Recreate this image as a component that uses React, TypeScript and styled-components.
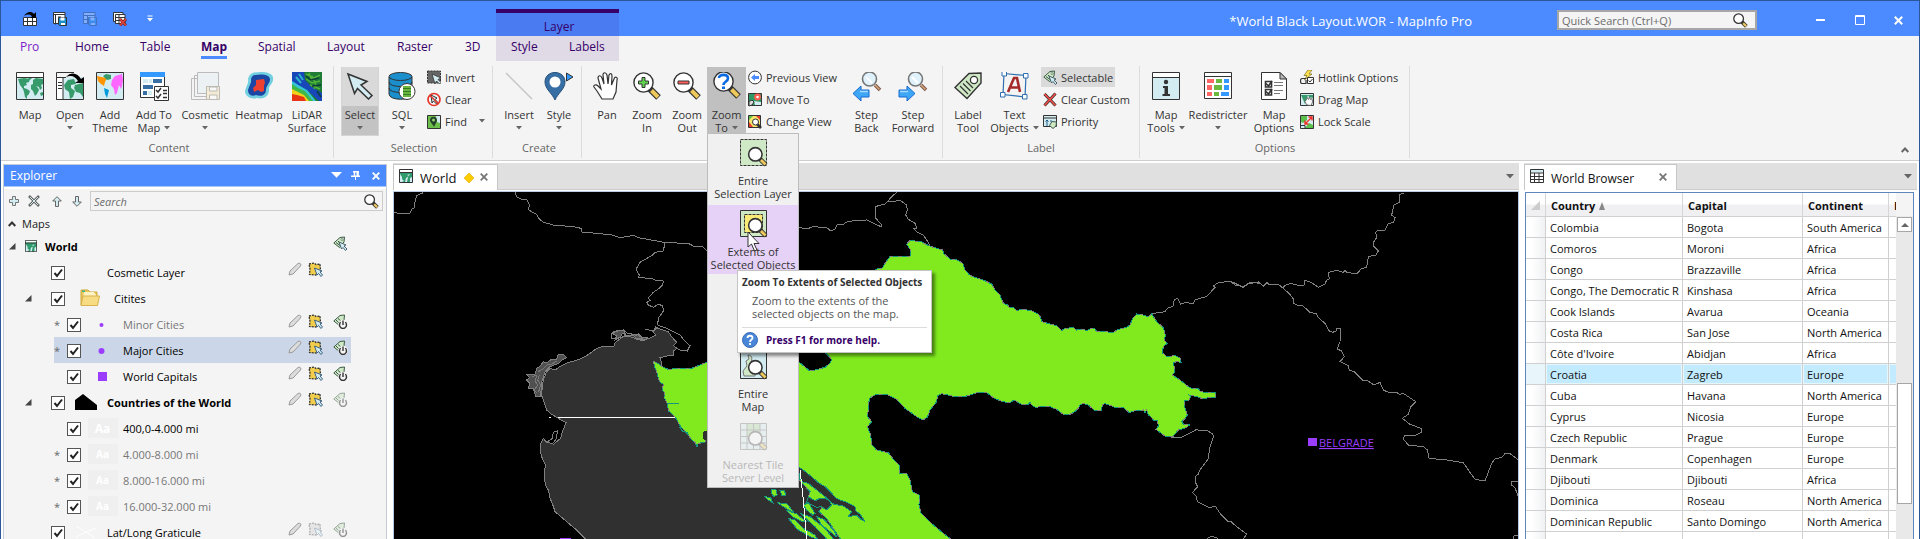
import React from "react";
import styled, { createGlobalStyle } from "styled-components";

const ink = "#333";
const green = "#379a6b";
const sky = "#d2ecf2";
const leaf = "#cfe8c5";

const Global = createGlobalStyle`
  *, *::before, *::after { box-sizing: border-box; }
  body { margin: 0; background: #fff; }
  body, button, input, table {
    font-family: "Open Sans", "Noto Sans", "Liberation Sans", sans-serif;
    font-size: 11px;
    color: #1a1a1a;
  }
  button { margin: 0; padding: 0; border: 0; background: none; cursor: default; }
  svg { display: block; flex: none; }
`;

/* ---------- frame ---------- */

const Frame = styled.div`
  display: flex;
  flex-direction: column;
  height: 100vh;
  min-width: 0;
  overflow: hidden;
  border: 1px solid #2b579a;
  border-bottom: 0;
  background: #fff;
`;

const TitleBar = styled.header`
  display: flex;
  align-items: center;
  flex: none;
  height: 35px;
  padding-right: 1px;
  background: #4c8bff;
`;

const QuickAccess = styled.div`
  display: flex;
  align-items: center;
  padding-left: 14px;
`;

const QuickButton = styled.button<{ $faded?: boolean }>`
  display: grid;
  place-items: center;
  width: 30px;
  height: 24px;
  opacity: ${(p) => (p.$faded ? 0.3 : 1)};
`;

const WindowTitle = styled.h1`
  margin: 4px 85px 0 auto;
  font-size: 13px;
  line-height: 20px;
  font-weight: 400;
  color: #fff;
  white-space: nowrap;
`;

const QuickSearch = styled.label`
  display: flex;
  align-items: center;
  width: 200px;
  height: 20px;
  margin: 3px 44px 0 0;
  padding-right: 7px;
  border: 2px solid #a6a6a6;
  background: #f4f4f4;
`;

const PlainInput = styled.input<{ $italic?: boolean }>`
  flex: 1;
  min-width: 0;
  padding: 0 3px;
  border: 0;
  outline: 0;
  background: transparent;
  font-style: ${(p) => (p.$italic ? "italic" : "normal")};
  &::placeholder { color: #6d6d6d; opacity: 1; }
`;

const WindowButton = styled.button`
  display: grid;
  place-items: center;
  width: 39px;
  height: 35px;
  padding-top: 3px;
`;

/* ---------- ribbon ---------- */

const TabBar = styled.nav`
  display: flex;
  align-items: flex-end;
  flex: none;
  height: 25px;
  padding-left: 19px;
  background: #f4f4f4;
`;

const Tab = styled.button<{ $w: number; $active?: boolean; $accent?: boolean }>`
  width: ${(p) => p.$w}px;
  height: 25px;
  text-align: left;
  font-size: 12px;
  line-height: 16px;
  font-weight: ${(p) => (p.$active ? 700 : 400)};
  color: ${(p) => (p.$accent ? "#7a22c9" : "#360068")};
  span {
    display: inline-block;
    height: 20px;
    border-bottom: 3px solid ${(p) => (p.$active ? "#4c8bff" : "transparent")};
  }
`;

const ContextGroup = styled.div`
  position: relative;
  width: 123px;
  height: 52px;
  border-top: 4px solid #360068;
  background: rgba(66, 0, 120, 0.11);
`;

const ContextTitle = styled.div`
  height: 23px;
  padding-left: 3px;
  line-height: 27px;
  text-align: center;
  font-size: 12px;
  color: #360068;
`;

const ContextTabs = styled.div`
  display: flex;
  padding-left: 15px;
`;

const Ribbon = styled.section`
  display: flex;
  flex: none;
  height: 100px;
  padding-top: 5px;
  border-bottom: 1px solid #cfcfcf;
  background: #f4f4f4;
`;

const Group = styled.section<{ $l: number; $r: number }>`
  display: flex;
  flex-direction: column;
  flex: none;
  height: 92px;
  padding: 1px ${(p) => p.$r}px 0 ${(p) => p.$l}px;
  border-right: 1px solid #dcdcdc;
`;

const GroupTools = styled.div`
  display: flex;
  height: 69px;
`;

const GroupName = styled.h2`
  margin: 0;
  font-size: 11px;
  line-height: 23px;
  font-weight: 400;
  text-align: center;
  color: #666;
`;

const BigButton = styled.button<{ $w: number; $state?: "split" | "open" }>`
  display: flex;
  flex-direction: column;
  align-items: center;
  width: ${(p) => p.$w}px;
  height: 69px;
  padding-top: 5px;
  line-height: 13px;
  color: ${ink};
  white-space: nowrap;
  background: ${(p) =>
    p.$state === "open"
      ? "#c0c0c0"
      : p.$state === "split"
      ? "linear-gradient(#d9d9d9 39px, #c3c3c3 39px)"
      : "none"};
  border: ${(p) => (p.$state === "split" ? "1px solid #d4d4d4" : "0")};
  border-width: 0 1px 1px;
`;

const IconSlot = styled.span`
  display: block;
  height: 28px;
`;

const BigLabel = styled.span`
  display: block;
  margin-top: 8px;
  text-align: center;
`;

const LabelLine = styled.span`
  display: flex;
  align-items: center;
  justify-content: center;
  gap: 4px;
  height: 13px;
`;

const SmallColumn = styled.div<{ $w: number }>`
  display: flex;
  flex-direction: column;
  align-items: flex-start;
  gap: 2px;
  width: ${(p) => p.$w}px;
`;

const SmallButton = styled.button<{ $on?: boolean; $wide?: boolean }>`
  display: flex;
  align-items: center;
  gap: 4px;
  width: ${(p) => (p.$wide ? "100%" : "auto")};
  height: 20px;
  padding: 0 2px;
  color: ${ink};
  white-space: nowrap;
  background: ${(p) => (p.$on ? "#dadada" : "none")};
  > svg:last-child:not(:first-child) { margin-left: auto; }
`;

const RibbonToggle = styled.button`
  align-self: flex-end;
  margin: 0 10px 7px auto;
`;

const MenuAnchor = styled.div`
  position: relative;
`;

const ZoomMenu = styled.div`
  position: absolute;
  z-index: 5;
  top: 66px;
  left: 0;
  width: 92px;
  border: 1px solid #bdbdbd;
  background: #f0f0f0;
`;

const MenuItem = styled.button<{ $hot?: boolean; $off?: boolean }>`
  position: relative;
  display: flex;
  flex-direction: column;
  align-items: center;
  width: 100%;
  height: ${(p) => (p.$hot || p.$off ? 69 : 71)}px;
  margin-bottom: ${(p) => (p.$hot ? 2 : 0)}px;
  padding-top: 4px;
  line-height: 13px;
  color: ${ink};
  white-space: nowrap;
  background: ${(p) => (p.$hot ? "#e6d2f7" : "none")};
  svg, span { opacity: ${(p) => (p.$off ? 0.3 : 1)}; }
  span { margin-top: 7px; }
`;

const MenuGap = styled.div`
  height: 71px;
`;

const Pointer = styled.svg`
  position: absolute;
  top: 26px;
  left: 39px;
`;

const Tip = styled.div`
  position: absolute;
  z-index: 6;
  top: 136px;
  left: 29px;
  width: 195px;
  height: 83px;
  padding: 4px;
  border: 1px solid #c4c4c4;
  background: #fff;
  box-shadow: 3px 3px 3px rgba(0, 0, 0, 0.45);
  color: ${ink};
  white-space: nowrap;
`;

const TipTitle = styled.strong`
  display: block;
  font-size: 10px;
  line-height: 15px;
`;

const TipText = styled.p`
  margin: 4px 0 7px 10px;
  line-height: 13px;
  color: #555;
`;

const TipHelp = styled.div`
  display: flex;
  align-items: center;
  gap: 8px;
  padding-top: 4px;
  border-top: 1px solid #dcdcdc;
  font-size: 10px;
  font-weight: 700;
  color: #360068;
`;

/* ---------- docked panes ---------- */

const Workspace = styled.main`
  display: flex;
  flex: 1;
  min-height: 0;
  padding: 2px 2px 0;
  background: #fff;
`;

const Explorer = styled.aside`
  display: flex;
  flex-direction: column;
  flex: none;
  width: 384px;
  margin-top: 1px;
  border: 1px solid #c4cad6;
  border-bottom: 0;
  background: #f4f4f4;
`;

const PaneHead = styled.header`
  display: flex;
  align-items: center;
  flex: none;
  height: 22px;
  padding-left: 6px;
  border-bottom: 1px solid #a9c4f5;
  background: #4c8bff;
  color: #fff;
`;

const PaneTitle = styled.h2`
  margin: 0 auto 0 0;
  font-size: 12px;
  font-weight: 400;
`;

const PaneButton = styled.button`
  display: grid;
  place-items: center;
  width: 20px;
  height: 20px;
`;

const TreeTools = styled.div`
  display: flex;
  align-items: center;
  flex: none;
  padding: 2px 3px 3px 0;
  border-top: 2px solid #fff;
`;

const TreeTool = styled.button`
  display: grid;
  place-items: center;
  width: 20px;
  height: 20px;
`;

const ToolPair = styled.div`
  display: flex;
  margin-right: 3px;
`;

const TreeSearch = styled.label`
  display: flex;
  align-items: center;
  flex: 1;
  height: 20px;
  padding-right: 3px;
  border: 1px solid #ccc;
`;

const SectionRow = styled.button`
  display: flex;
  align-items: center;
  flex: none;
  gap: 6px;
  height: 19px;
  padding-left: 4px;
`;

const Tree = styled.ul`
  flex: 1;
  min-height: 0;
  margin: 0;
  padding: 0;
  overflow: hidden;
  list-style: none;
`;

const TreeRow = styled.li<{ $level: number; $picked?: boolean }>`
  display: flex;
  align-items: center;
  width: ${(p) => (p.$level === 2 ? 297 : 347)}px;
  height: 26px;
  margin-left: ${(p) => (p.$level === 2 ? 50 : 0)}px;
  background: ${(p) => (p.$picked ? "#cbd7e8" : "none")};
`;

const Twisty = styled.span<{ $w: number }>`
  display: flex;
  justify-content: flex-end;
  width: ${(p) => p.$w}px;
`;

const Star = styled.span`
  width: 13px;
  color: #666;
`;

const Check = styled.input`
  appearance: none;
  flex: none;
  width: 14px;
  height: 14px;
  margin: 2px 0 0;
  border: 1px solid #555;
  background: #fff
    url("data:image/svg+xml,%3Csvg xmlns='http://www.w3.org/2000/svg' viewBox='0 0 12 12'%3E%3Cpath d='M2.5 6 5 9 10 2.5' fill='none' stroke='%23222' stroke-width='2'/%3E%3C/svg%3E")
    center / 12px 12px no-repeat;
`;

const Glyph = styled.span<{ $w: number }>`
  display: grid;
  place-items: center;
  flex: none;
  width: ${(p) => p.$w}px;
  height: 20px;
`;

const SampleText = styled.span<{ $big?: boolean }>`
  display: grid;
  place-items: center;
  width: 30px;
  height: 20px;
  margin-left: 1px;
  background: #efefef;
  color: #fff;
  font-size: ${(p) => (p.$big ? 12 : 10)}px;
  font-weight: 700;
`;

const TreeLabel = styled.label<{ $tone: "strong" | "normal" | "dim" }>`
  flex: 1;
  white-space: nowrap;
  color: ${(p) => (p.$tone === "dim" ? "#777" : "#000")};
  font-weight: ${(p) => (p.$tone === "strong" ? 700 : 400)};
`;

const RowActions = styled.span`
  display: grid;
  grid-template-columns: 20px 25px 18px;
  height: 20px;
`;

const Dock = styled.section<{ $w?: number }>`
  display: flex;
  flex-direction: column;
  flex: ${(p) => (p.$w ? `0 0 ${p.$w}px` : "1 1 0")};
  min-width: 0;
  margin-left: ${(p) => (p.$w ? 5 : 6)}px;
`;

const DockStrip = styled.div`
  display: flex;
  align-items: center;
  justify-content: space-between;
  flex: none;
  height: 27px;
  padding-right: 5px;
  border-bottom: 1px solid #ccc;
  background: #e0e0e0;
`;

const DockTab = styled.div<{ $w: number; $size: number }>`
  display: flex;
  align-items: center;
  width: ${(p) => p.$w}px;
  height: 26px;
  margin-top: 1px;
  padding: 2px 9px 0 5px;
  border: 1px solid #c6c6c6;
  border-bottom: 0;
  background: #fff;
  color: #111;
  font-size: ${(p) => p.$size}px;
  > svg:first-child { margin-right: 7px; margin-bottom: 5px; }
  > span { margin-right: auto; }
`;

const TabClose = styled.button`
  margin-left: 6px;
  margin-bottom: 3px;
`;

const MapPane = styled.div`
  flex: 1;
  min-height: 0;
  margin-top: 1px;
  border: 1px solid #b8cbe6;
  border-bottom: 0;
  background: #000;
  svg { width: 100%; height: 100%; }
`;

const BrowserPane = styled.div`
  display: flex;
  flex: 1;
  min-height: 0;
  margin: 2px 3px 0 1px;
  border: 1px solid #5f87bd;
  border-bottom: 0;
  overflow: hidden;
`;

const Sheet = styled.div`
  flex: 1;
  min-width: 0;
  overflow: hidden;
`;

const Grid = styled.table`
  width: 380px;
  table-layout: fixed;
  border-collapse: separate;
  border-spacing: 0;
  color: #111;
`;

const Head = styled.th`
  height: 24px;
  padding: 2px 4px 0 5px;
  border-right: 1px solid #d6d6d6;
  border-bottom: 1px solid #d0d0d0;
  background: linear-gradient(#fff 45%, #f0f0f2 55%);
  text-align: left;
  color: #111;
  overflow: hidden;
  white-space: nowrap;
  > span { display: flex; align-items: center; gap: 4px; }
`;

const Cell = styled.td<{ $on?: boolean; $head?: boolean }>`
  height: 21px;
  padding: 1px 0 0 4px;
  border-right: 1px solid #d0d0d0;
  border-bottom: 1px solid #d0d0d0;
  line-height: 16px;
  overflow: hidden;
  white-space: nowrap;
  background: ${(p) =>
    p.$on ? (p.$head ? "#e8f6fc" : "#c2ebff") : p.$head ? "linear-gradient(90deg, #fff 30%, #f0f1f3)" : "#fff"};
  box-shadow: ${(p) => (p.$on && !p.$head ? "inset 0 0 0 1px #e6f6fd" : "none")};
`;

const ScrollTrack = styled.div`
  display: flex;
  flex-direction: column;
  width: 17px;
  padding: 24px 1px 0;
  background: linear-gradient(#f4f4f4 23px, #e9e9e9 23px);
`;

const ScrollUp = styled.button`
  display: grid;
  place-items: center;
  height: 15px;
  border: 1px solid #a6a6a6;
  background: #fff;
`;

const ScrollThumb = styled.div`
  height: 121px;
  margin-top: 151px;
  border: 1px solid #a6a6a6;
  background: #fff;
`;

/* ---------- icons ---------- */

const Caret = ({ w = 6, fill = "#666" }: { w?: number; fill?: string }) => (
  <svg width={w} height={w / 2 + 1} viewBox="0 0 6 4" preserveAspectRatio="none">
    <path d="M0 0H6L3 3.6Z" fill={fill} />
  </svg>
);

const Continents = () => (
  <g fill={green}>
    <path d="M2 7 8 6 14 7 13 10 10 11 11 13 8 14 8 16 11 17 14 19 13 22 11 24 11 27 9 25 8 20 7 17 4 13 3 10Z" />
    <path d="M12 6H16L14 8ZM17 8 20 6 27 7 27 12 25 13 26 16 24 18 23 15 20 14 22 16 23 18 21 22 19 24 17 19 15 17 15 13 17 12ZM24 21 27 20V23L25 24Z" />
  </g>
);

const MapIcon = () => (
  <svg width="28" height="28" viewBox="0 0 28 28">
    <path d="M.5.5H27.5V27.5H.5Z" fill={sky} />
    <Continents />
    <path d="M.5.5H27.5V5H.5Z" fill="#fff" />
    <path d="M.5.5H27.5V27.5H.5ZM.5 5.5H27.5" fill="none" stroke={ink} />
  </svg>
);

const MiniMapIcon = ({ size }: { size: number }) => (
  <svg width={size} height={size} viewBox="0 0 14 14">
    <path d="M.5.5H13.5V13.5H.5Z" fill="#2f9a6b" stroke={ink} />
    <path d="M1 1H13V3H1Z" fill="#fff" />
    <path d="M0 3.5H14" stroke={ink} />
    <path d="M1 5 3 8 3 10 5 12 3 13H1ZM6 13 7 9 10 7 8 6 11 5 9 8 8 13ZM11 9 13 8V13H11Z" fill={sky} />
  </svg>
);

const OpenIcon = () => (
  <svg width="28" height="28" viewBox="0 0 28 28">
    <path d="M6 5H27V27H6Z" fill={sky} />
    <path d="M8 13 12 8 18 7 20 12 15 13 15 16 19 19 17 25 14 27 13 20 9 17ZM19 13 27 11V25L24 21 20 20 18 16Z" fill={green} />
    <path d="M27.5 10V27.5H.5V.5H18M.5 5.5H10" fill="none" stroke={ink} />
    <path d="M.5 5.5H7V27.5H.5Z" fill="#fff" stroke={ink} />
    <path d="M2 10.5H6M2 13.5H6M2 16.5H6" stroke={ink} />
    <path d="M10 5C15-1 22 1 25 7L28 5V11H19L22 9C19 4 15 3 10 5Z" fill="#000" />
  </svg>
);

const ThemeIcon = () => (
  <svg width="28" height="28" viewBox="0 0 28 28">
    <path d="M.5.5H27.5V27.5H.5Z" fill={sky} />
    <path d="M1 4 5 5 11 6 9 10 8 14 5 12 2 9Z" fill="#ff9500" />
    <path d="M7 4 10 2 15 3 15 7 11 8Z" fill={green} />
    <path d="M8 16 13 18 12 22 11 26 9 22Z" fill="#009adb" />
    <path d="M16 8 19 4 26 2 27 8 26 14 25 17 23 13 21 21 19 23 18 17 15 13Z" fill="#ff66ff" />
    <path d="M.5.5H27.5V27.5H.5Z" fill="none" stroke={ink} />
  </svg>
);

const AddToMapIcon = () => (
  <svg width="30" height="30" viewBox="0 0 30 30">
    <path d="M1.5.5H25.5V25.5H1.5Z" fill="#fff" stroke={ink} />
    <path d="M1 0H26V5H1Z" fill="#3399ff" />
    <path d="M4 7H9V11H4ZM10 7H13V11H10ZM9 19H13V23H9Z" fill={sky} />
    <path d="M14 7H23V11H14ZM4 13H14V17H4ZM4 19H8V23H4Z" fill="#376fa5" />
    <path d="M15.5 14.5H29.5V28.5H15.5Z" fill="#fff" stroke={ink} />
    <path d="M17 18 19 20 22 16M17 24 19 26 22 22M24 18.5H28M24 21.5H28M24 25.5H28" fill="none" stroke={ink} strokeWidth="1.5" />
  </svg>
);

const CosmeticIcon = () => (
  <svg width="30" height="28" viewBox="0 0 30 28" opacity=".45">
    <path d="M1.5 6.5H20V27.5H1.5ZM4.500 3.500H24V24.500H4.500Z" fill="#f4f4f4" stroke="#777" />
    <path d="M7.5.5H28.500V21.500H7.500Z" fill="#e3f1f4" stroke="#777" />
    <path d="M16.5 14.5H29.500V27.500H16.500Z" fill="#f3e2b0" stroke="#776" />
    <path d="M19.5 15H27V19H19.500ZM19.500 23H27V27.500H19.500Z" fill="#fff" stroke="#776" />
  </svg>
);

const HeatmapIcon = () => (
  <svg width="30" height="28" viewBox="0 0 30 28">
    <path d="M10 .5C17-.5 28-.5 29 5.500 30 12 24 13 25 18 25 25 19 27.500 13 26 7 28 1 24 1 19 2 14 5 11 4 7 5 3 7 1 10 .5Z" fill="#72cfe0" />
    <path d="M11 3C17 2 25 2 26 7 26 12 22 13 22 18 22 23 17 25 12 23 7 25 4 22 4 18 5 14 8 11 7 7 8 4 9 3 11 3Z" fill="#1b46a3" />
    <path d="M12 8 20 7 21 11 20 13 20 19 17 20 14 18 10 20 9 16 12 13Z" fill="#ef4130" />
  </svg>
);

const LidarIcon = () => (
  <svg width="30" height="30" viewBox="0 1 30 30">
    <path d="M0 0H30V30H0Z" fill="#1f7a35" />
    <path d="M12 0H0V12L8 15 16 20 27 30H30V22L20 16 13 9Z" fill="#1747b8" />
    <path d="M0 10 8 15 15 19 24 30H0Z" fill="#35c4d8" />
    <path d="M0 13 6 17 13 20 21 30H0Z" fill="#3fb848" />
    <path d="M0 18 6 21 12 24 17 30H0Z" fill="#f0d21c" />
    <path d="M0 23 5 24 12 26 14 30H0Z" fill="#e63414" />
    <path d="M7 3 11 9M4 6 9 12" stroke="#2bb5c9" strokeWidth="2" />
    <path d="M14 3 22 7 28 4M14 8 20 12 28 10M18 14 28 18M20 5 24 14 22 18M17 2 20 10" fill="none" stroke="#4fb63a" strokeWidth="1.5" />
    <path d="M14 5 19 9 27 7M20 15 29 14M25 20 29 26" fill="none" stroke="#0d3d3a" strokeWidth="1.5" />
  </svg>
);

const ArrowIcon = () => (
  <svg width="28" height="28" viewBox="0 0 28 28">
    <path d="M2 2 21 9.5 15 13 26 23.5 22.5 27 11.5 16.5 8.500 21.500Z" fill={sky} stroke={ink} strokeWidth="1.500" />
  </svg>
);

const SqlIcon = () => (
  <svg width="28" height="29" viewBox="0 0 28 29">
    <path d="M1 5V22C1 29 24 29 24 22V5" fill="#1a8fcc" stroke={ink} />
    <ellipse cx="12.5" cy="4.5" rx="11.5" ry="4" fill="#1a8fcc" stroke={ink} />
    <path d="M1 10C1 16 24 16 24 10M1 16C1 22 24 22 24 16" fill="none" stroke={ink} />
    <circle cx="19" cy="19.5" r="8" fill="#fff" stroke={ink} />
    <path d="M15 14H23V25H15Z" fill="#6cb33f" />
    <path d="M15 16.5H23M15 19.5H23M15 22.5H23" stroke="#2f7d22" />
  </svg>
);

const InsertIcon = () => (
  <svg width="28" height="28" viewBox="0 0 28 28">
    <path d="M1 1 27 27" stroke="#c4c4c4" strokeWidth="1.5" />
  </svg>
);

const StyleIcon = () => (
  <svg width="30" height="29" viewBox="0 0 30 29">
    <path d="M11 28C8 21 1 17 1 10 1 4 5.5.5 11 .5S21 4 21 10C21 17 14 21 11 28Z" fill="#376fa5" stroke="#27527c" />
    <circle cx="11" cy="10" r="5.5" fill="#fff" />
    <path d="M22.5 1 29 5 22.5 9Z" fill="#3399ff" stroke={ink} />
  </svg>
);

const HandIcon = () => (
  <svg width="28" height="28" viewBox="0 0 28 28">
    <path
      d="M9 27 4 19 1 15C0 13 3 12 5 14L8 17 5 6C5 3 8 3 9 6L11 12 10 3C10 0 13 0 14 3L15 12 16 3C17 1 19 1 19 4L18.5 13 21 7C22 4 25 5 24 8L23 20 20 27Z"
      fill="#fff"
      stroke={ink}
      strokeWidth="1.2"
    />
  </svg>
);

const Lens = ({ rim = 1.4 }: { rim?: number }) => (
  <>
    <path d="M17 17 25.5 25.5" stroke={ink} strokeWidth="6.5" />
    <path d="M18.5 18.5 25 25" stroke="#eec85b" strokeWidth="4" />
    <circle cx="10.5" cy="10.5" r="9.6" fill="#fff" stroke={ink} strokeWidth={rim} />
  </>
);

const ZoomInIcon = () => (
  <svg width="28" height="28" viewBox="0 0 28 28">
    <Lens />
    <path d="M9 5.5H12V9H15.5V12H12V15.5H9V12H5.5V9H9Z" fill="#5fd34d" stroke={ink} />
  </svg>
);

const ZoomOutIcon = () => (
  <svg width="28" height="28" viewBox="0 0 28 28">
    <Lens />
    <path d="M5 9H16V12H5Z" fill="#ff5f5f" stroke={ink} />
  </svg>
);

const ZoomToIcon = () => (
  <svg width="28" height="28" viewBox="0 1 28 28">
    <Lens />
    <path d="M6 7C6 3 15 2.5 15 7.5 15 10.5 10.5 10.5 10.5 14" fill="none" stroke="#0a6ae0" strokeWidth="2.6" />
    <path d="M9 15.5H12V18H9Z" fill="#0a6ae0" />
  </svg>
);

const StepIcon = ({ forward }: { forward?: boolean }) => (
  <svg width="30" height="31" viewBox="0 1 30 31">
    <path d="M23 14 28 19" stroke="#7a5548" strokeWidth="3.5" />
    <path d="M23 14 27.5 18.5" stroke="#d8a878" strokeWidth="1.5" />
    <circle cx="17.5" cy="8" r="7" fill="#dff1fa" stroke="#777" strokeWidth="1.6" />
    <path d="M14 6 20 12" stroke="#fff" strokeWidth="2" />
    <path
      d={forward ? "M1 19H9V15L17 22.5 9 30V26H1Z" : "M17 19H9V15L1 22.5 9 30V26H17Z"}
      fill="#3ea6f5"
      stroke="#1669d2"
    />
    <path d={forward ? "M2 20.5H10" : "M16 20.5H8"} stroke="#a8dcff" strokeWidth="1.5" />
  </svg>
);

const TagIcon = () => (
  <svg width="28" height="28" viewBox="0 0 28 28">
    <path d="M15 1.5 27 1 27 11 13 26.5 1 15.5Z" fill={leaf} stroke={ink} strokeWidth="1.4" />
    <circle cx="20" cy="8" r="3.6" fill="#fff" stroke={ink} strokeWidth="1.3" />
    <path d="M6 14 14 22M9 11.5 16.5 19M12 9 19 16" stroke={ink} strokeWidth="1.2" />
  </svg>
);

const TextObjectsIcon = () => (
  <svg width="30" height="30" viewBox="0 2 30 30">
    <path d="M4 3.5 26 5.5 25 27 3 24.5Z" fill="none" stroke="#2f6fb0" strokeWidth="1.2" />
    <g fill="#fff" stroke="#2f6fb0">
      <path d="M2 1.5H6.5V6H2ZM23.5 3.5H28V8H23.5ZM.5 22.5H5V27H.5ZM22.5 24.5H27V29H22.5Z" />
    </g>
    <path d="M8 22 14 8H17L20 22M11 17.5H18" fill="none" stroke="#a52a2a" strokeWidth="2.6" />
  </svg>
);

const MapToolsIcon = () => (
  <svg width="28" height="28" viewBox="0 0 28 28">
    <path d="M.5.5H27.5V27.5H.5Z" fill={sky} />
    <path d="M.5.5H27.5V5.5H.5Z" fill="#fff" />
    <path d="M.5.5H27.5V27.5H.5ZM.5 5.5H27.5" fill="none" stroke={ink} />
    <circle cx="14" cy="10" r="2.2" fill={ink} />
    <path d="M11 14H16V22H18V24H10.5V22H12.5V16H11Z" fill={ink} />
  </svg>
);

const RedistrictIcon = () => (
  <svg width="28" height="28" viewBox="0 1 28 28">
    <path d="M.5 1.5H27.5V27.5H.5ZM.5 5.5H27.5" fill="#fff" stroke={ink} />
    <path d="M3 8H10V12H3ZM3 14H8V19H3ZM3 21H8V25H3Z" fill="#ff6666" />
    <path d="M12 8H18V12H12ZM10 14H18V19H10ZM10 21H15V25H10Z" fill="#6cb93f" />
    <path d="M20 8H25V12H20ZM20 14H25V19H20ZM17 21H25V25H17Z" fill="#3399ff" />
  </svg>
);

const MapOptionsIcon = () => (
  <svg width="26" height="28" viewBox="0 0 26 28">
    <path d="M.5.5H19L25.5 7V27.5H.5Z" fill="#fff" stroke={ink} />
    <path d="M19 .5V7H25.5Z" fill="#bbb" stroke={ink} />
    <path d="M4.5 9.5H10.5V15H4.5ZM4.5 17.5H10.5V23H4.5Z" fill="none" stroke={ink} strokeWidth="1.6" />
    <path d="M5 11.5 7.5 14 11 9M5 19.5 7.5 22 11 17" fill="none" stroke={ink} strokeWidth="1.6" />
    <path d="M13 10.5H22M13 13.5H22M13 18.5H22M13 21.5H19" stroke="#777" />
  </svg>
);

const SmallSvg = ({ children }: { children: React.ReactNode }) => (
  <svg width="14" height="15" viewBox="0 0 14 15">{children}</svg>
);

const InvertIcon = () => (
  <SmallSvg>
    <path d="M.5 1H13.5V13H.5Z" fill="#666" stroke={ink} strokeDasharray="2 1" />
    <path d="M5 4 14 8 11 9.5 14 12.5 12.5 14 9.5 11 8 14Z" fill={sky} stroke={ink} strokeWidth=".8" />
  </SmallSvg>
);
const ClearIcon = () => (
  <SmallSvg>
    <path d="M4 3 10 6 8 7.5 11 10.5 9.5 12 6.5 9 5 11Z" fill={sky} stroke={ink} />
    <circle cx="7" cy="7.5" r="6" fill="none" stroke="#e5352b" strokeWidth="1.7" />
    <path d="M3 3.5 11 11.5" stroke="#e5352b" strokeWidth="1.5" />
  </SmallSvg>
);
const FindIcon = () => (
  <SmallSvg>
    <path d="M.5 1.5H13.5V14.5H.5Z" fill="#6cbf4b" stroke={ink} />
    <path d="M9 2H13V9L10 8Z" fill={sky} />
    <path d="M7 13C6 10 3 8.5 3 6 3 1.5 10 1.5 10 6 10 8.5 8 10 7 13Z" fill="#24402a" />
    <circle cx="6.5" cy="6" r="1.5" fill="#8fd36f" />
  </SmallSvg>
);
const PreviousIcon = () => (
  <SmallSvg>
    <circle cx="7" cy="7.5" r="6.4" fill="#fff" stroke={ink} />
    <path d="M3 7.5 7 4V6H11V9H7V11Z" fill="#4c8bff" />
  </SmallSvg>
);
const MoveToIcon = () => (
  <SmallSvg>
    <path d="M.5 1.5H13.5V13.5H.5Z" fill="#2f9a66" stroke={ink} />
    <path d="M6 9 13 10V13H7Z" fill={sky} />
    <circle cx="9.5" cy="5" r="3.4" fill="#ff5a4d" />
    <circle cx="9.5" cy="5" r="1.3" fill="#fff" />
    <path d="M1 14V9.5L4 8 6 10 4 13Z" fill="#ddd" stroke={ink} />
  </SmallSvg>
);
const ChangeViewIcon = () => (
  <SmallSvg>
    <path d="M.5 1.5H12.5V13.5H.5Z" fill="#f7e36a" stroke={ink} />
    <path d="M1 13V8L5 13ZM8 2H12V6Z" fill="#e83a2d" />
    <path d="M1 2H5L1 6Z" fill="#5bbf4b" />
    <path d="M9 10 13 14" stroke={ink} strokeWidth="2.6" />
    <circle cx="7.5" cy="8" r="3" fill="#fff" stroke={ink} />
  </SmallSvg>
);
const SmallTag = () => (
  <path d="M7 1.5 11.5 1 11 6 6.5 11.5 .8 7Z" fill={leaf} stroke="#3c5a46" />
);
const SelectableIcon = () => (
  <SmallSvg>
    <SmallTag />
    <path d="M3 6.5 7 9.5M5 5 8 8" stroke="#3c5a46" />
    <circle cx="9" cy="3.5" r="1" fill="#fff" stroke="#3c5a46" strokeWidth=".6" />
    <path d="M6 6 13 9 11 10 14 13 12.500 14.500 10 11.500 8.500 13Z" fill={sky} stroke="#3b5560" strokeWidth=".9" />
  </SmallSvg>
);
const ClearCustomIcon = () => (
  <SmallSvg>
    <path d="M1.5 2 12.5 13.5M12.5 1.5 1.5 13.5" stroke={ink} strokeWidth="3" />
    <path d="M1.5 2 12.5 13.5M12.5 1.5 1.5 13.5" stroke="#ee4b43" strokeWidth="1.8" />
  </SmallSvg>
);
const PriorityIcon = () => (
  <SmallSvg>
    <path d="M.5 1.5H13.5V12.5H.5ZM.5 4H13.5" fill={sky} stroke={ink} />
    <path d="M4 6V12M2.5 7.5 4 6 5.5 7.5M7 7H9" fill="none" stroke="#1d5a86" />
    <path d="M9 7.5 13.5 8 13 12 10 14.5 6.5 11.5Z" fill={leaf} stroke="#3c5a46" />
  </SmallSvg>
);
const HotlinkIcon = () => (
  <SmallSvg>
    <path d="M8 0 4 5.5H7L4.5 10 12 4H9L12 0Z" fill="#ffe14d" stroke="#7a6a1c" strokeWidth=".7" />
    <path d="M6 8.5H2C0 8.5 0 13.5 2 13.5H6V10" fill="none" stroke={ink} strokeWidth="1.2" />
    <path d="M7.5 7.5H13.5V13.5H7.5Z" fill="#fff" stroke={ink} />
    <path d="M8.5 10.5 10 12 12.5 9" fill="none" stroke={ink} />
  </SmallSvg>
);
const DragIcon = () => (
  <SmallSvg>
    <path d="M.5 1.5H13.5V13.5H.5Z" fill={sky} stroke={ink} />
    <path d="M1 3H8L5 12ZM8 3H13V6L9 5Z" fill={green} />
    <path d="M7 13 4.5 9 6 8.5 7 5.5 8.5 7.5 9.5 5 10.5 7.5 12 6.5 12.5 10 11 13.5Z" fill="#fff" stroke="#555" strokeWidth=".8" />
  </SmallSvg>
);
const LockIcon = () => (
  <SmallSvg>
    <path d="M.5 1.5H13.5V14.5H.5Z" fill={sky} stroke={ink} />
    <path d="M1 2H7V6L3 9 1 8Z" fill="#5bbf4b" />
    <path d="M5 14 9 9 13 11V14Z" fill="#5bbf4b" />
    <path d="M5 10 12 3M8.5 3H12V6.5M5 6.5V10H8.5" fill="none" stroke="#ee2f25" strokeWidth="1.4" />
    <path d="M1 11.5H5V14" fill="none" stroke={ink} />
  </SmallSvg>
);

const SearchIcon = () => (
  <svg width="15" height="15" viewBox="0 0 28 28">
    <path d="M17 17 25 25" stroke={ink} strokeWidth="7" />
    <path d="M19 19 24.5 24.5" stroke="#eec85b" strokeWidth="4" />
    <circle cx="10.5" cy="10.5" r="9" fill="#fff" stroke={ink} strokeWidth="2.4" />
  </svg>
);

const LensCorner = () => (
  <g transform="translate(9 9) scale(.7)">
    <Lens rim={2.2} />
  </g>
);

const EntireLayerIcon = () => (
  <svg width="29" height="29" viewBox="0 0 29 29">
    <path d="M1.5 1.5H27.5V27.5H1.5Z" fill={leaf} stroke={ink} strokeDasharray="3 1" />
    <LensCorner />
  </svg>
);
const ExtentsIcon = () => (
  <svg width="29" height="29" viewBox="0 0 29 29">
    <path d="M1.5 1.5H27.5V27.5H1.5Z" fill={leaf} stroke={ink} />
    <path d="M5.5 5.5H23.5V23.5H5.5Z" fill="#faeb76" stroke={ink} strokeDasharray="3 1" />
    <LensCorner />
  </svg>
);
const EntireMapIcon = () => (
  <svg width="29" height="29" viewBox="0 0 29 29">
    <path d="M1.5 1.5H27.5V27.5H1.5Z" fill={sky} stroke={ink} />
    <path d="M9 4C14 4 13 9 12 11L17 13 16 25 5 25 4 20 8 15 7 10 10 8Z" fill={leaf} stroke="#777" />
    <LensCorner />
  </svg>
);
const TileIcon = () => (
  <svg width="29" height="29" viewBox="0 0 29 29">
    <path d="M1.5 1.5H27.5V27.5H1.5Z" fill={sky} />
    <path d="M8 2H21V14H8Z" fill="#a6d896" />
    <path d="M1.5 1.5H27.5V27.5H1.5ZM8 1.5V27.5M14.5 1.5V27.5M21 1.5V27.5M1.5 8H27.5M1.5 14.5H27.5M1.5 21H27.5" fill="none" stroke="#666" />
    <LensCorner />
  </svg>
);

const TableIcon = ({ children, top }: { children?: React.ReactNode; top?: boolean }) => (
  <svg width="14" height="14" viewBox="0 0 14 14">
    <path d="M.5 .5H13.5V13.5H.5Z" fill="#fff" stroke={ink} />
    {top && <path d="M1 1H13V3.5H1Z" fill={sky} />}
    <path d="M.5 4H13.5M.5 7.5H13.5M.5 10.5H13.5M4.5 4V13.5M9 4V13.5" stroke={ink} />
    {children}
  </svg>
);

const SaveTableIcon = ({ copies }: { copies?: boolean }) => (
  <svg width="14" height="14" viewBox="0 0 14 14">
    <path d="M.5.5H12V11.5H.5Z" fill="#fff" stroke={ink} />
    {copies ? (
      <path d="M2.5 2.5V12.5M.5 2.500H12M5 5H8" fill="none" stroke={ink} />
    ) : (
      <path d="M.5 3.5H12M.5 7.5H5M4.5 3.500V11" fill="none" stroke={ink} />
    )}
    <path d="M5.5 5.5H13.5V13.5H6.5L5.5 12.5Z" fill="#1a8fcc" stroke={ink} />
    <path d="M7.5 5.5H11.5V8.5H7.5ZM8 11H12V13H8Z" fill="#fff" />
  </svg>
);

const PencilIcon = () => (
  <svg width="14" height="14" viewBox="0 0 14 14">
    <path d="M1 13 2 9 10 1.5C12 .5 13.5 2 12.5 4L5 12Z" fill="#ddd" stroke="#999" />
  </svg>
);
const PickIcon = ({ off }: { off?: boolean }) => (
  <svg width="15" height="15" viewBox="0 0 15 15" opacity={off ? 0.35 : 1}>
    <path d="M1 2 6 1 8 2.5 12 2 12.5 9 8 13 1.5 12.5 2 7Z" fill={off ? "#ccc" : "#f2cd4b"} stroke={ink} strokeWidth="1.3" strokeDasharray="2 1" />
    <path d="M6.5 6 14 9 12 10 14.5 13 13 14.5 10.5 11.5 9 13Z" fill={sky} stroke="#3b6080" />
  </svg>
);
const AutoLabelIcon = ({ off }: { off?: boolean }) => (
  <svg width="15" height="15" viewBox="0 0 15 15" opacity={off ? 0.5 : 1}>
    <SmallTag />
    <path d="M3 6 6 9M5 4.500 8 7" stroke="#3c5a46" />
    <circle cx="10" cy="10.500" r="4.800" fill="#f4f4f4" />
    <path d="M7.5 8C5 12 8 14.500 10 14.500S15 12 12.500 8M10 6.500V11" fill="none" stroke={ink} strokeWidth="1.400" />
  </svg>
);
const FolderIcon = () => (
  <svg width="20" height="18" viewBox="0 0 20 18">
    <path d="M1 1H8L10 3H17V16H1Z" fill="#e8c659" stroke="#cfa93b" />
    <path d="M4 3H14L16 6V10H3Z" fill="#fff3c4" />
    <path d="M3 7H19.5L17.5 16.5H1Z" fill="#f8dc84" stroke="#d8b24a" />
    <path d="M2 1.500H5V3H2Z" fill="#3bb58a" />
  </svg>
);

const CloseX = ({ color, size = 8 }: { color: string; size?: number }) => (
  <svg width={size} height={size} viewBox="0 0 8 8">
    <path d="M.7.7 7.3 7.3M7.3.7.7 7.3" stroke={color} strokeWidth="1.8" />
  </svg>
);

const TwistyIcon = () => (
  <svg width="7" height="7" viewBox="0 0 7 7">
    <path d="M6.5 0V6.5H0Z" fill="#444" />
  </svg>
);

const Chevron = ({ color }: { color: string }) => (
  <svg width="8" height="6" viewBox="0 0 8 6">
    <path d="M.7 5 4 1.5 7.3 5" fill="none" stroke={color} strokeWidth="2" />
  </svg>
);

/* ---------- map ---------- */

// Outlines are digitised at three units per map pixel, each sheet with its own origin.
const sheet = (ox: number, oy: number) => (pts: string) =>
  pts
    .trim()
    .split(/\s+/)
    .map((p) => {
      const [x, y] = p.split(",").map(Number);
      return `${x + ox},${y + oy}`;
    })
    .join(" ");

const west = sheet(0, 0);
const mid = sheet(930, -75);
const east = sheet(1380, 75);
const far = sheet(2520, 0);

const sea = west(
  "470,650 480,640 495,645 510,634 530,624 560,616 585,605 605,592 620,580 640,574 672,574 676,562 690,552 697,546 710,540 745,545 752,556 770,553 790,544 798,540 788,530 800,518 815,524 835,530 845,545 860,562 850,572 862,580 850,588 850,602 830,603 810,608 815,625 820,660 1300,700 1500,1160 595,1160 560,1125 530,1100 495,1070 487,1045 480,1030 475,1005 466,990 463,960 466,930 455,905 450,885 453,865 460,850 468,860 480,862 490,868 500,860 512,850 518,828 528,803 500,787 485,778 470,765 462,740 455,722 457,690 462,670"
);

const croatia = [
  west("790,618 805,626 818,636 835,643 860,641 905,640 925,632 950,622 1100,600 1225,622"),
  mid("300,699 312,708 328,722 345,720 375,712 390,700 395,690 388,680 375,668 400,560 470,470 527,418"),
  east(
    `77,268 97,264 108,245 120,230 160,230 180,228 183,212 170,193 178,183 190,182 215,186 230,194 250,202 278,210 282,222 290,228 300,237 318,238 338,250 345,270 358,284 368,290
    400,300 425,312 435,330 450,345 455,358 460,370 475,376 478,384 490,382 500,392 515,387 545,393 565,402 572,412 575,425 600,432 622,438 635,452 645,445 670,443 680,450 700,448 710,452 722,446
    735,446 740,455 775,456 790,458 800,450 812,446 830,442 840,435 848,415 860,402 880,405 895,410 905,402 912,412 920,425 940,443 946,465 943,480 952,490 940,500 937,518 950,530
    975,527 990,533 993,547 980,545 970,548 975,575 967,585 990,600 1015,620 1030,627 1045,625 1050,634 1070,638 1097,638 1097,653 1080,652 1060,657 1040,650 1018,645 1022,652 1015,662 1003,662 1005,685 1012,705 1008,712
    995,725 1000,732 1020,735 1005,744 985,750 970,768 945,768 918,748 925,738 922,722 910,720 905,712 895,705 890,690 885,700 880,690 855,692 838,698 820,683 800,684 785,678 765,671 757,674 755,690 732,690
    715,675 700,670 690,674 685,685 675,695 660,703 640,703 620,688 600,680 580,678 560,682 550,680 540,668 535,673 515,673 492,660 478,669 450,662 430,653 410,638 385,637 340,651 315,650
    275,641 262,648 260,665 240,690 232,712 218,720 200,710 165,685 140,658 110,643 75,645 58,655 55,685 53,710 65,725 52,740 62,765 66,795 80,810 115,818
    130,838 147,855 147,882 170,880 180,900 187,935 208,945 207,975 213,1000 250,1035 280,1060 320,1090`
  ),
  mid("430,1240 400,1195 380,1165 357,1145 368,1130 345,1120 322,1115 330,1085 312,1065 297,1050 297,1015"),
  west("1150,900 1000,850 950,830 945,862 925,865 921,875 915,862 905,855 895,840 885,828 870,812 858,790 845,775 835,768 833,750 830,740 822,728 824,712 816,705 820,688 812,684 805,670 800,650 795,640"),
].join(" ");

const channels = [
  mid("290,1008 310,1020 335,1040 355,1058 375,1070 395,1090 410,1106 435,1115 465,1130 466,1142 480,1152 495,1175 485,1170 470,1155 445,1160 455,1145 430,1128 400,1122 375,1100 350,1080 325,1060 305,1055"),
  mid("325,1100 345,1112 360,1105 385,1108 395,1125 380,1140 365,1130 350,1132 320,1118"),
];

const islands = [
  "215,1078 228,1080 232,1095 222,1100 214,1090",
  "240,1082 252,1080 258,1095 246,1098",
  "195,1100 212,1103 218,1118 204,1110",
  "232,1118 262,1122 282,1148 270,1142 250,1130",
  "258,1140 290,1152 320,1175 308,1176 280,1162",
  "265,1165 285,1170 310,1195 345,1215 352,1227 330,1220 292,1198",
  "300,1150 330,1160 375,1195 400,1227 380,1227 345,1190",
  "310,1125 325,1118 345,1150 338,1155 320,1140",
  "350,1160 372,1168 400,1200 412,1222 390,1205 365,1185",
].map((p) => mid(p));

const borders = [
  west("12,173 30,175 60,175 66,162 73,158 75,140 80,122 98,114 98,110"),
  west("375,110 380,125 395,133 412,135 418,150 416,165 440,178 448,192 460,202 490,210 550,215 573,220 575,231 640,237 665,240 690,248 720,243 730,240 745,248 800,258 825,263 895,265 910,273 940,276 952,290 990,300"),
  west("825,263 820,288 795,292 785,302 750,322 738,343 748,360 745,368 785,370 795,375 820,378 818,390 805,402 790,412 775,428 780,436 770,443 775,450 790,457 805,448 818,452 820,468 805,490 803,510 835,522 870,540 882,555 900,572 892,588 870,585 858,578"),
  mid("297,292 320,297 340,290 370,292 385,295 390,303 405,298 410,285 430,283 440,276 460,272 500,270 520,280 543,290 543,282 530,268 525,262 525,230 555,222 565,213 570,205 590,187"),
  mid("565,213 575,216 600,210 620,225 622,240 617,255 625,268 645,280 650,295 640,295 650,305 670,315 680,330 690,347"),
  east("905,402 912,400 945,395 952,385 970,378 970,368 975,358 983,355 992,372 1005,368 1030,370 1034,360 1060,352 1070,350 1095,322 1090,318 1105,308 1130,305 1145,305 1180,322 1195,312 1215,308 1230,310 1240,318 1250,308 1260,315"),
  east("960,771 995,772 1015,762 1040,748 1050,752 1070,751 1088,762 1090,770 1080,800 1074,838 1048,872 1046,882 1035,890 1035,905 1043,920 1027,938 1038,948 1042,965 1075,982 1097,980 1110,1000 1135,1025 1143,1025 1160,1040 1190,1062 1180,1077"),
  east("1070,1077 1085,1068 1103,1075"),
  far("0,378 15,390 30,391 38,397 60,382 85,381 100,393 112,383 118,390 145,388 160,400 163,392 183,385 200,390 222,390 225,376 245,383 265,397 285,387 290,375 298,372 295,352 320,346 340,352 345,346 350,352 380,357 395,340 410,338 415,305 438,300 445,288 432,275 430,262 440,248 437,232 445,225 465,225 475,205 490,203 495,188 485,180 492,150 508,142 508,118 522,115"),
  far("160,400 180,418 192,435 190,445 205,452 218,452 240,472 260,477 265,488 285,505 298,528 308,532 318,528 320,520 332,522 330,560 322,582 335,588 343,605 330,620 355,632 358,645 372,650 400,677 412,677 432,690 450,682 460,705 475,712 500,712 508,718 520,715 557,740 542,755 535,778 517,790 540,808 573,820 575,832 555,842 525,840 520,852 535,870 580,875 592,885 597,910 650,915 700,923 715,945 735,973 765,978 785,925 795,912 815,907 825,896 840,896 865,915"),
  far("868,980 845,980 845,990 855,998 863,1020 868,1025"),
  far("850,1152 852,1142 865,1140"),
  west("663,550 665,538 680,527 700,525 712,535 730,538 745,540 760,552 740,552 720,545 700,545 680,550 663,550"),
  west("765,522 790,528 797,515 805,520"),
];

const marshes = [
  "665,535 672,528 680,530 690,525 702,527 706,538 696,536 690,548 675,555 680,543",
  "728,538 740,542 745,536 755,546 772,548 760,558 752,550 740,552",
  "440,640 450,634 460,620 470,624 485,612 500,612 504,600 520,598 530,608 518,614 505,625 480,635 465,650 455,680 452,725 438,725 430,700 415,700 420,685 410,675 418,668 410,658 435,658",
];

const creeks = [
  "425,665 440,660 436,680 444,690 432,705 442,715",
  "445,650 462,640 470,630 485,628 500,618",
  "448,660 443,675 452,690 446,710",
];

const WorldMap = () => (
  <svg viewBox="0 0 1124 347" preserveAspectRatio="xMinYMin slice" role="img" aria-label="World map">
    <g transform="translate(-4 -37) scale(.33333333)" shapeRendering="crispEdges">
      <polygon points={sea} fill="#303030" stroke="#808080" strokeWidth="3" />
      {marshes.map((m) => (
        <polygon key={m} points={m} fill="#505050" stroke="#808080" strokeWidth="3" />
      ))}
      {creeks.map((c) => (
        <polyline key={c} points={c} fill="none" stroke="#7a7a7a" strokeWidth="3" />
      ))}
      <polygon points="470,862 487,850 490,832 502,828 500,850 488,866" fill="#000" stroke="#808080" strokeWidth="3" />
      <path d="M504 787H858M476 788H484" stroke="#fff" strokeWidth="3" />
      <polygon points={croatia} fill="#80ea1f" stroke="#15967c" strokeWidth="3" />
      <polygon points={croatia} fill="none" stroke="#808080" strokeWidth="3" strokeDasharray="10 16" />
      <path d="M832 746H866M868 815l10 14 16 4" fill="none" stroke="#15967c" strokeWidth="4" />
      <polygon points="940,830 952,828 952,858 940,852" fill="#303030" />
      {channels.map((c) => (
        <polygon key={c} points={c} fill="#303030" stroke="#15967c" strokeWidth="3" />
      ))}
      {islands.map((i) => (
        <polygon key={i} points={i} fill="#80ea1f" stroke="#15967c" strokeWidth="3" />
      ))}
      <path d="M1230 945 1240 1035 1250 1152" fill="none" stroke="#fff" strokeWidth="3" />
      {borders.map((b) => (
        <polyline key={b} points={b} fill="none" stroke="#808080" strokeWidth="3" />
      ))}
      <path d="M510 1150H542" stroke="#9b3dff" strokeWidth="3" />
    </g>
    <rect x="914" y="246" width="9" height="8" fill="#9b3dff" />
    <text x="925" y="255" fill="#9b3dff" fontSize="11" textDecoration="underline">BELGRADE</text>
  </svg>
);

/* ---------- data ---------- */

type Tool = { icon: React.ReactNode; lines: string[]; w: number; arrow?: "inline" | "below"; state?: "split" | "open" };

const BigTool = ({ icon, lines, w, arrow, state }: Tool) => (
  <BigButton $w={w} $state={state}>
    <IconSlot>{icon}</IconSlot>
    <BigLabel>
      {lines.map((l, i) => (
        <LabelLine key={l}>
          {l}
          {arrow === "inline" && i === lines.length - 1 && <Caret />}
        </LabelLine>
      ))}
      {arrow === "below" && <LabelLine><Caret /></LabelLine>}
    </BigLabel>
  </BigButton>
);

type TreeItem = {
  name: string;
  level: 1 | 2;
  glyph: React.ReactNode;
  indent?: number;
  tone?: "strong" | "normal" | "dim";
  star?: boolean;
  open?: boolean;
  picked?: boolean;
  edit?: boolean;
  pick?: "on" | "off";
  label?: "on" | "off";
};

const Dot = ({ r }: { r: number }) => (
  <svg width="10" height="10" viewBox="0 0 10 10"><circle cx="4.500" cy="6" r={r} fill="#9b3dff" /></svg>
);

const layers: TreeItem[] = [
  { name: "Cosmetic Layer", level: 1, glyph: null, edit: true, pick: "on" },
  { name: "Citites", level: 1, glyph: <FolderIcon />, indent: 49, open: true },
  { name: "Minor Cities", level: 2, glyph: <Dot r={2} />, tone: "dim", star: true, edit: true, pick: "on", label: "on" },
  { name: "Major Cities", level: 2, glyph: <Dot r={3} />, star: true, picked: true, edit: true, pick: "on", label: "on" },
  { name: "World Capitals", level: 2, glyph: <svg width="9" height="9"><rect width="9" height="9" fill="#9b3dff" /></svg>, edit: true, pick: "on", label: "on" },
  {
    name: "Countries of the World", level: 1, tone: "strong", open: true, edit: true, pick: "on", label: "off",
    glyph: <svg width="22" height="16" viewBox="0 0 22 16"><path d="M0 6 8 0 13 4 22 11V16H0Z" fill="#000" /></svg>,
  },
  { name: "400,0-4.000 mi", level: 2, glyph: <SampleText $big>Aa</SampleText> },
  { name: "4.000-8.000 mi", level: 2, tone: "dim", star: true, glyph: <SampleText>Aa</SampleText> },
  { name: "8.000-16.000 mi", level: 2, tone: "dim", star: true, glyph: <SampleText>Aa</SampleText> },
  { name: "16.000-32.000 mi", level: 2, tone: "dim", star: true, glyph: <SampleText>Aa</SampleText> },
  {
    name: "Lat/Long Graticule", level: 1, edit: true, pick: "off", label: "off",
    glyph: <svg width="22" height="14" viewBox="0 0 22 14"><path d="M1 1 11 7 21 3M1 12 11 7 20 13" fill="none" stroke="#fff" /></svg>,
  },
];

const rows = [
  ["Colombia", "Bogota", "South America"],
  ["Comoros", "Moroni", "Africa"],
  ["Congo", "Brazzaville", "Africa"],
  ["Congo, The Democratic R", "Kinshasa", "Africa"],
  ["Cook Islands", "Avarua", "Oceania"],
  ["Costa Rica", "San Jose", "North America"],
  ["Côte d'Ivoire", "Abidjan", "Africa"],
  ["Croatia", "Zagreb", "Europe"],
  ["Cuba", "Havana", "North America"],
  ["Cyprus", "Nicosia", "Europe"],
  ["Czech Republic", "Prague", "Europe"],
  ["Denmark", "Copenhagen", "Europe"],
  ["Djibouti", "Djibouti", "Africa"],
  ["Dominica", "Roseau", "North America"],
  ["Dominican Republic", "Santo Domingo", "North America"],
  ["East Timor", "Dili", "Asia"],
];

const TreeNode = ({ item }: { item: TreeItem }) => {
  const id = "layer-" + item.name.replace(/[^a-z0-9]+/gi, "-");
  return (
    <TreeRow $level={item.level} $picked={item.picked}>
      {item.level === 1 ? (
        <>
          <Twisty $w={28}>{item.open && <TwistyIcon />}</Twisty>
          <Glyph $w={19} />
        </>
      ) : (
        <Star>{item.star ? "*" : ""}</Star>
      )}
      <Check type="checkbox" id={id} defaultChecked />
      <Glyph $w={item.indent ?? 42}>{item.glyph}</Glyph>
      <TreeLabel htmlFor={id} $tone={item.tone ?? "normal"}>{item.name}</TreeLabel>
      <RowActions>
        <span>{item.edit && <PencilIcon />}</span>
        <span>{item.pick && <PickIcon off={item.pick === "off"} />}</span>
        <span>{item.label && <AutoLabelIcon off={item.label === "off"} />}</span>
      </RowActions>
    </TreeRow>
  );
};

export default function App() {
  return (
    <Frame>
      <Global />
      <TitleBar>
        <QuickAccess>
          <QuickButton aria-label="Open table">
            <svg width="14" height="14" viewBox="0 0 14 14">
              <path d="M.5 5.5H13.5V13.5H.5ZM.5 9.5H13.5M4.5 5.5V13.5M9.500 5.500V13.500" fill="#fff" stroke={ink} />
              <path d="M1 4C4-1 9-1 11 2L13 0V6H7L9 4.500C7 2 4 2 1 4Z" fill="#000" />
            </svg>
          </QuickButton>
          <QuickButton aria-label="Save workspace"><SaveTableIcon copies /></QuickButton>
          <QuickButton aria-label="Save table" $faded><SaveTableIcon /></QuickButton>
          <QuickButton aria-label="Close table">
            <svg width="14" height="14" viewBox="0 0 14 14">
              <path d="M.5.5H10V9.500H.500Z" fill="#fff" stroke={ink} />
              <path d="M2.5 2.5H12V11.500H2.500ZM2.500 5.500H12M2.500 8.500H12M6 2.500V11.500" fill="#fff" stroke={ink} />
              <path d="M7 7 13 13.500M13 7 7 13.500" stroke="#7c1d17" strokeWidth="2.600" />
              <path d="M7 7 13 13.500M13 7 7 13.500" stroke="#e0483c" strokeWidth="1.400" />
            </svg>
          </QuickButton>
          <QuickButton aria-label="Customize">
            <svg width="6" height="7" viewBox="0 0 6 7"><path d="M.5 1H5.5" stroke="#fff" /><path d="M0 3H6L3 6.5Z" fill="#fff" /></svg>
          </QuickButton>
        </QuickAccess>
        <WindowTitle>*World Black Layout.WOR - MapInfo Pro</WindowTitle>
        <QuickSearch>
          <PlainInput placeholder="Quick Search (Ctrl+Q)" aria-label="Quick Search" />
          <SearchIcon />
        </QuickSearch>
        <WindowButton aria-label="Minimize"><svg width="9" height="2"><rect width="9" height="2" fill="#fff" /></svg></WindowButton>
        <WindowButton aria-label="Maximize">
          <svg width="10" height="10" viewBox="0 0 10 10"><path d="M.5.5H9.5V9.5H.5ZM0 1.5H10" fill="none" stroke="#fff" /></svg>
        </WindowButton>
        <WindowButton aria-label="Close"><CloseX color="#fff" size={9} /></WindowButton>
      </TitleBar>

      <TabBar>
        <Tab $w={55} $accent><span>Pro</span></Tab>
        <Tab $w={65}><span>Home</span></Tab>
        <Tab $w={61}><span>Table</span></Tab>
        <Tab $w={57} $active><span>Map</span></Tab>
        <Tab $w={69}><span>Spatial</span></Tab>
        <Tab $w={70}><span>Layout</span></Tab>
        <Tab $w={68}><span>Raster</span></Tab>
        <Tab $w={31}><span>3D</span></Tab>
        <ContextGroup>
          <ContextTitle>Layer</ContextTitle>
          <ContextTabs>
            <Tab $w={58}><span>Style</span></Tab>
            <Tab $w={40}><span>Labels</span></Tab>
          </ContextTabs>
        </ContextGroup>
      </TabBar>

      <Ribbon>
        <Group $l={9} $r={5}>
          <GroupTools>
            <BigTool w={40} icon={<MapIcon />} lines={["Map"]} />
            <BigTool w={40} icon={<OpenIcon />} lines={["Open"]} arrow="below" />
            <BigTool w={40} icon={<ThemeIcon />} lines={["Add", "Theme"]} />
            <BigTool w={48} icon={<AddToMapIcon />} lines={["Add To", "Map"]} arrow="inline" />
            <BigTool w={54} icon={<CosmeticIcon />} lines={["Cosmetic"]} arrow="below" />
            <BigTool w={54} icon={<HeatmapIcon />} lines={["Heatmap"]} />
            <BigTool w={42} icon={<LidarIcon />} lines={["LiDAR", "Surface"]} />
          </GroupTools>
          <GroupName>Content</GroupName>
        </Group>
        <Group $l={7} $r={5}>
          <GroupTools>
            <BigTool w={38} icon={<ArrowIcon />} lines={["Select"]} arrow="below" state="split" />
            <BigTool w={46} icon={<SqlIcon />} lines={["SQL"]} arrow="below" />
            <SmallColumn $w={62}>
              <SmallButton><InvertIcon />Invert</SmallButton>
              <SmallButton><ClearIcon />Clear</SmallButton>
              <SmallButton $wide><FindIcon />Find<Caret /></SmallButton>
            </SmallColumn>
          </GroupTools>
          <GroupName>Selection</GroupName>
        </Group>
        <Group $l={6} $r={2}>
          <GroupTools>
            <BigTool w={40} icon={<InsertIcon />} lines={["Insert"]} arrow="below" />
            <BigTool w={40} icon={<StyleIcon />} lines={["Style"]} arrow="below" />
          </GroupTools>
          <GroupName>Create</GroupName>
        </Group>
        <Group $l={5} $r={5}>
          <GroupTools>
            <BigTool w={40} icon={<HandIcon />} lines={["Pan"]} />
            <BigTool w={40} icon={<ZoomInIcon />} lines={["Zoom", "In"]} />
            <BigTool w={40} icon={<ZoomOutIcon />} lines={["Zoom", "Out"]} />
            <MenuAnchor>
              <BigTool w={39} icon={<ZoomToIcon />} lines={["Zoom", "To"]} arrow="inline" state="open" />
              <ZoomMenu>
                <MenuItem><EntireLayerIcon /><span>Entire<br />Selection Layer</span></MenuItem>
                <MenuItem $hot>
                  <ExtentsIcon />
                  <span>Extents of<br />Selected Objects</span>
                  <Pointer width="14" height="21" viewBox="0 0 14 21">
                    <path d="M1 1V16L4.5 13 7.5 20 10 19 7 12.5H12Z" fill="#fff" stroke="#333" />
                  </Pointer>
                </MenuItem>
                <MenuGap />
                <MenuItem><EntireMapIcon /><span>Entire<br />Map</span></MenuItem>
                <MenuItem $off><TileIcon /><span>Nearest Tile<br />Server Level</span></MenuItem>
                <Tip role="tooltip">
                  <TipTitle>Zoom To Extents of Selected Objects</TipTitle>
                  <TipText>Zoom to the extents of the<br />selected objects on the map.</TipText>
                  <TipHelp>
                    <svg width="16" height="16" viewBox="0 0 16 16">
                      <circle cx="8" cy="8" r="7.5" fill="#4a86d8" stroke="#3a6cb4" />
                      <path d="M5.5 6C5.5 3 10.5 3 10.5 6 10.5 8 8 7.5 8 10M8 11V13" fill="none" stroke="#fff" strokeWidth="1.8" />
                    </svg>
                    Press F1 for more help.
                  </TipHelp>
                </Tip>
              </ZoomMenu>
            </MenuAnchor>
            <SmallColumn $w={98}>
              <SmallButton><PreviousIcon />Previous View</SmallButton>
              <SmallButton><MoveToIcon />Move To</SmallButton>
              <SmallButton><ChangeViewIcon />Change View</SmallButton>
            </SmallColumn>
            <BigTool w={45} icon={<StepIcon />} lines={["Step", "Back"]} />
            <BigTool w={48} icon={<StepIcon forward />} lines={["Step", "Forward"]} />
          </GroupTools>
        </Group>
        <Group $l={5} $r={5}>
          <GroupTools>
            <BigTool w={40} icon={<TagIcon />} lines={["Label", "Tool"]} />
            <BigTool w={53} icon={<TextObjectsIcon />} lines={["Text", "Objects"]} arrow="inline" />
            <SmallColumn $w={93}>
              <SmallButton $on><SelectableIcon />Selectable</SmallButton>
              <SmallButton><ClearCustomIcon />Clear Custom</SmallButton>
              <SmallButton><PriorityIcon />Priority</SmallButton>
            </SmallColumn>
          </GroupTools>
          <GroupName>Label</GroupName>
        </Group>
        <Group $l={6} $r={5}>
          <GroupTools>
            <BigTool w={40} icon={<MapToolsIcon />} lines={["Map", "Tools"]} arrow="inline" />
            <BigTool w={64} icon={<RedistrictIcon />} lines={["Redistricter"]} arrow="below" />
            <BigTool w={48} icon={<MapOptionsIcon />} lines={["Map", "Options"]} />
            <SmallColumn $w={106}>
              <SmallButton><HotlinkIcon />Hotlink Options</SmallButton>
              <SmallButton><DragIcon />Drag Map</SmallButton>
              <SmallButton><LockIcon />Lock Scale</SmallButton>
            </SmallColumn>
          </GroupTools>
          <GroupName>Options</GroupName>
        </Group>
        <RibbonToggle aria-label="Collapse ribbon"><Chevron color="#666" /></RibbonToggle>
      </Ribbon>

      <Workspace>
        <Explorer>
          <PaneHead>
            <PaneTitle>Explorer</PaneTitle>
            <PaneButton aria-label="Pane menu"><Caret w={11} fill="#fff" /></PaneButton>
            <PaneButton aria-label="Pin pane">
              <svg width="10" height="10" viewBox="0 0 10 10"><path d="M2 .8H8M3.5 1V5M7 1V5" stroke="#fff" strokeWidth="1.5" /><path d="M5.5 1H7.5V5H5.5ZM0 4.5H9V6H0ZM4 6H5V9H4Z" fill="#fff" /></svg>
            </PaneButton>
            <PaneButton aria-label="Close pane"><CloseX color="#fff" /></PaneButton>
          </PaneHead>
          <TreeTools>
            <ToolPair>
              <TreeTool aria-label="Add">
                <svg width="10" height="10" viewBox="0 0 10 10"><path d="M3.5.5H6.5V3.5H9.5V6.5H6.5V9.5H3.5V6.5H.5V3.5H3.5Z" fill={sky} stroke="#777" /></svg>
              </TreeTool>
              <TreeTool aria-label="Remove">
                <svg width="12" height="12" viewBox="0 0 12 12"><path d="M1 1 11 11M11 1 1 11" stroke="#666" strokeWidth="2.6" /><path d="M2 2 10 10M10 2 2 10" stroke={sky} /></svg>
              </TreeTool>
            </ToolPair>
            <ToolPair>
              <TreeTool aria-label="Move up">
                <svg width="10" height="11" viewBox="0 0 10 11"><path d="M5 .7 9.3 5H6.5V10.5H3.5V5H.7Z" fill={sky} stroke="#666" /></svg>
              </TreeTool>
              <TreeTool aria-label="Move down">
                <svg width="10" height="11" viewBox="0 0 10 11"><path d="M5 10.3 9.3 6H6.5V.5H3.5V6H.7Z" fill={sky} stroke="#666" /></svg>
              </TreeTool>
            </ToolPair>
            <TreeSearch>
              <PlainInput $italic placeholder="Search" aria-label="Search layers" />
              <SearchIcon />
            </TreeSearch>
          </TreeTools>
          <SectionRow><Chevron color={ink} />Maps</SectionRow>
          <Tree>
            <TreeRow $level={1}>
              <Twisty $w={12}><TwistyIcon /></Twisty>
              <Glyph $w={29}><MiniMapIcon size={12} /></Glyph>
              <TreeLabel as="span" $tone="strong">World</TreeLabel>
              <RowActions><span /><span /><span><SelectableIcon /></span></RowActions>
            </TreeRow>
            {layers.map((l) => <TreeNode key={l.name} item={l} />)}
          </Tree>
        </Explorer>

        <Dock>
          <DockStrip>
            <DockTab $w={105} $size={13}>
              <MiniMapIcon size={14} />
              <span>World</span>
              <svg width="10" height="10" viewBox="0 0 10 10"><path d="M5 0 10 5 5 10 0 5Z" fill="#fc0" stroke="#e0a800" strokeWidth=".6" /></svg>
              <TabClose aria-label="Close World"><CloseX color="#777" /></TabClose>
            </DockTab>
            <Caret w={8} />
          </DockStrip>
          <MapPane><WorldMap /></MapPane>
        </Dock>

        <Dock $w={393}>
          <DockStrip>
            <DockTab $w={153} $size={12}>
              <TableIcon top />
              <span>World Browser</span>
              <TabClose aria-label="Close World Browser"><CloseX color="#777" /></TabClose>
            </DockTab>
            <Caret w={8} />
          </DockStrip>
          <BrowserPane>
            <Sheet>
              <Grid>
                <colgroup>
                  <col width="20" /><col width="137" /><col width="120" /><col width="86" /><col />
                </colgroup>
                <thead>
                  <tr>
                    <Head aria-label="Row">
                      <svg width="9" height="9" viewBox="0 0 9 9"><path d="M9 0V9H0Z" fill="#ccc" /></svg>
                    </Head>
                    <Head><span>Country<svg width="6" height="8" viewBox="0 0 6 8"><path d="M3 0 6 8H0Z" fill="#888" /></svg></span></Head>
                    <Head>Capital</Head>
                    <Head>Continent</Head>
                    <Head>I</Head>
                  </tr>
                </thead>
                <tbody>
                  {rows.map(([country, capital, continent]) => {
                    const on = country === "Croatia";
                    return (
                      <tr key={country}>
                        <Cell $on={on} $head />
                        <Cell $on={on}>{country}</Cell>
                        <Cell $on={on}>{capital}</Cell>
                        <Cell $on={on}>{continent}</Cell>
                        <Cell $on={on} />
                      </tr>
                    );
                  })}
                </tbody>
              </Grid>
            </Sheet>
            <ScrollTrack>
              <ScrollUp aria-label="Scroll up"><svg width="8" height="4" viewBox="0 0 8 4"><path d="M4 0 8 4H0Z" fill="#666" /></svg></ScrollUp>
              <ScrollThumb />
            </ScrollTrack>
          </BrowserPane>
        </Dock>
      </Workspace>
    </Frame>
  );
}
